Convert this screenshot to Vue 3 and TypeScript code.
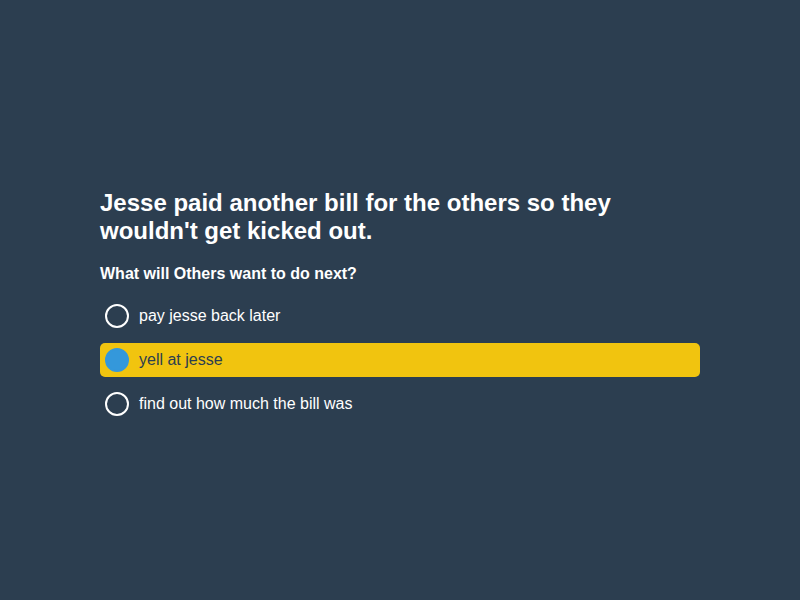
<script setup lang="ts">
import { ref } from 'vue'

interface Choice {
  id: string
  label: string
}

const choices: Choice[] = [
  { id: 'pay-back', label: 'pay jesse back later' },
  { id: 'yell', label: 'yell at jesse' },
  { id: 'find-out', label: 'find out how much the bill was' },
]

const selected = ref<string>('yell')
</script>

<template>
  <main class="page">
    <section class="quiz">
      <h1 class="context">Jesse paid another bill for the others so they wouldn't get kicked out.</h1>
      <fieldset class="question">
        <legend class="prompt">What will Others want to do next?</legend>
        <div class="choices">
          <label
            v-for="choice in choices"
            :key="choice.id"
            class="choice"
            :class="{ selected: selected === choice.id }"
            :for="choice.id"
          >
            <input :id="choice.id" v-model="selected" class="radio" type="radio" name="answer" :value="choice.id" />
            <span>{{ choice.label }}</span>
          </label>
        </div>
      </fieldset>
    </section>
  </main>
</template>

<style>
body {
  margin: 0;
  background: #2c3e50;
}
</style>

<style scoped>
.page {
  box-sizing: border-box;
  display: flex;
  align-items: center;
  justify-content: center;
  min-height: 100vh;
  color: #fff;
  font-family: "Liberation Sans", Arial, sans-serif;
  font-size: 16px;
}

.quiz {
  width: 75%;
  padding-top: 10px;
}

.context {
  margin: 0 0 20px;
  font-size: 24px;
  line-height: 28px;
}

.question {
  min-width: 0;
  margin: 0;
  padding: 0;
  border: 0;
}

.prompt {
  padding: 0;
  font-weight: bold;
  line-height: 18px;
}

.choices {
  display: flex;
  flex-direction: column;
  gap: 10px;
  padding-top: 16px;
}

.choice {
  display: flex;
  align-items: center;
  gap: 10px;
  padding: 5px;
  border-radius: 5px;
  line-height: 18px;
  cursor: pointer;
}

.choice.selected {
  background: #f1c40f;
  color: #2c3e50;
}

.radio {
  appearance: none;
  box-sizing: border-box;
  flex: none;
  width: 24px;
  height: 24px;
  margin: 0;
  border: 2px solid #fff;
  border-radius: 50%;
}

.radio:checked {
  border-color: #3498db;
  background: #3498db;
}
</style>
